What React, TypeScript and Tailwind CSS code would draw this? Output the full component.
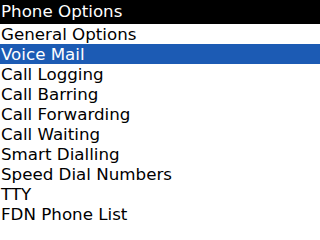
import React from "react";

const items = [
  "General Options",
  "Voice Mail",
  "Call Logging",
  "Call Barring",
  "Call Forwarding",
  "Call Waiting",
  "Smart Dialling",
  "Speed Dial Numbers",
  "TTY",
  "FDN Phone List",
];

export default function App() {
  return (
    <div
      className="w-[320px] h-[240px] bg-white overflow-hidden flex flex-col"
      style={{ fontFamily: '"DejaVu Sans", sans-serif' }}
    >
      <div className="h-[24px] bg-black text-white text-[16.7px] leading-[22px] pl-[1px] whitespace-nowrap">
        Phone Options
      </div>
      <div className="flex flex-col">
        {items.map((it, i) => (
          <div
            key={it}
            className={
              i === 1
                ? "h-[20px] bg-[#1c5bb4] text-white text-[16.7px] leading-[20px] pl-[1px] whitespace-nowrap"
                : "h-[20px] text-black text-[16.7px] leading-[20px] pl-[1px] whitespace-nowrap"
            }
          >
            {it}
          </div>
        ))}
      </div>
    </div>
  );
}
